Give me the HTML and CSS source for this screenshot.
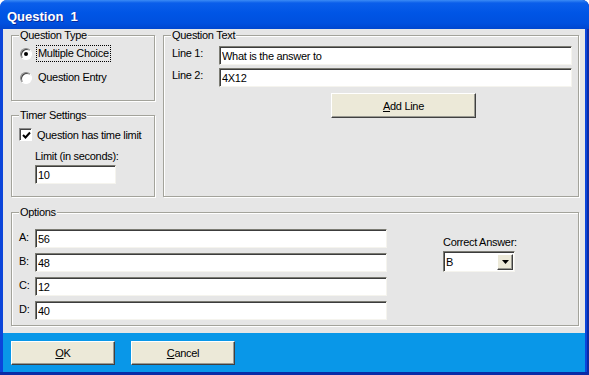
FILE: index.html
```html
<!DOCTYPE html>
<html lang="en">
<head>
  <meta charset="UTF-8" />
  <title>Question 1</title>
  <link rel="stylesheet" href="styles.css">
</head>
<body>

  <div class="window">
    <div class="titlebar">Question&nbsp; 1</div>

    <div class="client">
      <div class="top-row">
        <div class="left-col">
          <div class="group type-group">
            <div class="group-title">Question Type</div>
            <div class="radio-row">
              <span class="radio checked"></span>
              <span class="caption focus">Multiple Choice</span>
            </div>
            <div class="radio-row">
              <span class="radio"></span>
              <span class="caption">Question Entry</span>
            </div>
          </div>

          <div class="group timer-group">
            <div class="group-title">Timer Settings</div>
            <div class="check-row">
              <span class="checkbox">
                <svg width="9" height="9" viewBox="0 0 9 9">
                  <polyline points="1,4 3.5,6.5 8,1.5" fill="none" stroke="#000" stroke-width="2" />
                </svg>
              </span>
              Question has time limit
            </div>
            <div class="limit-label">Limit (in seconds):</div>
            <input class="textbox limit-box" type="text" value="10">
          </div>
        </div>

        <div class="group text-group">
          <div class="group-title">Question Text</div>
          <div class="line-row">
            <span class="line-label">Line 1:</span>
            <input class="textbox line-input" type="text" value="What is the answer to">
          </div>
          <div class="line-row">
            <span class="line-label">Line 2:</span>
            <input class="textbox line-input" type="text" value="4X12">
          </div>
          <button class="btn add-btn"><u>A</u>dd Line</button>
        </div>
      </div>

      <div class="group options-group">
        <div class="group-title">Options</div>
        <div class="options-body">
          <div class="option-list">
            <div class="option-row"><span class="option-label">A:</span><input class="textbox option-input" type="text" value="56"></div>
            <div class="option-row"><span class="option-label">B:</span><input class="textbox option-input" type="text" value="48"></div>
            <div class="option-row"><span class="option-label">C:</span><input class="textbox option-input" type="text" value="12"></div>
            <div class="option-row"><span class="option-label">D:</span><input class="textbox option-input" type="text" value="40"></div>
          </div>
          <div class="answer-col">
            <div class="answer-label">Correct Answer:</div>
            <div class="select">
              <span class="select-value">B</span>
              <span class="arrow">
                <svg width="7" height="4" viewBox="0 0 7 4"><polygon points="0,0 7,0 3.5,4" fill="#000" /></svg>
              </span>
            </div>
          </div>
        </div>
      </div>
    </div>

    <div class="footer">
      <button class="btn dlg-btn"><u>O</u>K</button>
      <button class="btn dlg-btn"><u>C</u>ancel</button>
    </div>
  </div>

</body>
</html>
```

FILE: styles.css
```css
* {
  box-sizing: border-box;
}

body {
  margin: 0;
  background: #fff;
  font-family: "Liberation Sans", Arial, sans-serif;
  font-size: 11px;
  letter-spacing: -0.3px;
  color: #000;
}

.window {
  width: 589px;
  height: 375px;
  padding: 0 4px 3px 3px;
  border-radius: 7px 7px 0 0;
  background: linear-gradient(to top, #0a2ba6 3px, #0b45da 3px);
  box-shadow: inset -2px 0 0 #0a2ba6;
  display: flex;
  flex-direction: column;
}

.titlebar {
  height: 29px;
  margin: 0 -4px 0 -3px;
  padding: 9px 0 0 7px;
  border-radius: 7px 7px 0 0;
  background: linear-gradient(#3b8bf5 0, #0a5eea 3px, #0055e5 45%, #0050df 80%, #0046cf 100%);
  color: #fff;
  font-weight: bold;
  font-size: 13px;
  line-height: 15px;
  letter-spacing: 0;
  text-shadow: 1px 1px 0 #0a2a9a;
}

.client {
  height: 304px;
  padding: 0 6px 0 8px;
  background: #e6e6e6;
}

.top-row {
  display: flex;
  gap: 8px;
  margin-top: 6px;
}

.left-col {
  width: 144px;
  display: flex;
  flex-direction: column;
}

/* etched group box */
.group {
  border: 1px solid #a3a39b;
  box-shadow: inset 1px 1px 0 #fff, 1px 1px 0 #fff;
}

.group-title {
  width: fit-content;
  margin: -7px 0 0 7px;
  padding: 0 1px;
  line-height: 13px;
  background: #e6e6e6;
}

.type-group {
  height: 66px;
}

.radio-row {
  display: flex;
  align-items: center;
  height: 17px;
  margin: 3px 0 0 8px;
}

.radio-row + .radio-row {
  margin-top: 7px;
}

.radio {
  width: 12px;
  height: 12px;
  margin-right: 4px;
  border: 1px solid;
  border-color: #8a8a8a #fff #fff #8a8a8a;
  border-radius: 50%;
  background: #fff;
  box-shadow: inset 1px 1px 0 #444;
  display: flex;
  align-items: center;
  justify-content: center;
}

.radio.checked::after {
  content: "";
  width: 4px;
  height: 4px;
  border-radius: 50%;
  background: #000;
}

.caption {
  padding: 1px;
  border: 1px dotted transparent;
  line-height: 13px;
}

.caption.focus {
  border-color: #000;
}

.timer-group {
  height: 82px;
  margin-top: 14px;
}

.check-row {
  display: flex;
  align-items: center;
  height: 15px;
  margin: 5px 0 0 7px;
}

.checkbox {
  width: 13px;
  height: 13px;
  margin-right: 5px;
  border: 1px solid;
  border-color: #8a8a8a #fff #fff #8a8a8a;
  box-shadow: inset 1px 1px 0 #444;
  background: #fff;
  display: flex;
  align-items: center;
  justify-content: center;
  padding: 1px 0 0 1px;
}

.limit-label {
  margin: 8px 0 0 23px;
  line-height: 13px;
}

.textbox {
  display: block;
  height: 19px;
  margin: 0;
  padding: 0 0 0 2px;
  border: 1px solid;
  border-color: #7b7b73 #f5f4ee #f5f4ee #7b7b73;
  box-shadow: inset 1px 1px 0 #3c3c3c;
  background: #fff;
  font: inherit;
  letter-spacing: inherit;
  color: #000;
  outline: none;
}

.limit-box {
  width: 81px;
  margin: 2px 0 0 23px;
}

.text-group {
  width: 416px;
  height: 162px;
}

.line-row {
  display: flex;
  margin: 4px 0 0 8px;
}

.line-row + .line-row {
  margin-top: 3px;
}

.line-label {
  width: 47px;
  padding-top: 1px;
  line-height: 13px;
}

.line-input {
  width: 353px;
}

.btn {
  padding: 0;
  border: 1px solid;
  border-color: #fff #404040 #404040 #fff;
  box-shadow: inset -1px -1px 0 #9a9a92;
  background: #ece9d8;
  font: inherit;
  letter-spacing: inherit;
  color: #000;
}

.add-btn {
  display: block;
  width: 145px;
  height: 25px;
  margin: 6px 0 0 167px;
}

.options-group {
  height: 114px;
  margin-top: 15px;
}

.options-body {
  display: flex;
}

.option-list {
  margin: 10px 0 0 7px;
  display: flex;
  flex-direction: column;
  gap: 5px;
}

.option-row {
  display: flex;
}

.option-label {
  width: 16px;
  padding-top: 2px;
  line-height: 13px;
}

.option-input {
  width: 352px;
}

.answer-col {
  margin-left: 56px;
  padding-top: 17px;
}

.answer-label {
  line-height: 13px;
}

.select {
  display: flex;
  align-items: center;
  width: 72px;
  height: 21px;
  margin-top: 2px;
  padding: 1px 1px 1px 2px;
  border: 1px solid;
  border-color: #7b7b73 #f5f4ee #f5f4ee #7b7b73;
  box-shadow: inset 1px 1px 0 #3c3c3c;
  background: #fff;
}

.select-value {
  flex: 1;
}

.arrow {
  width: 16px;
  height: 16px;
  border: 1px solid;
  border-color: #fff #404040 #404040 #fff;
  box-shadow: inset -1px -1px 0 #9a9a92;
  background: #ece9d8;
  display: flex;
  align-items: center;
  justify-content: center;
}

.footer {
  height: 39px;
  padding: 8px 0 0 8px;
  display: flex;
  align-items: flex-start;
  gap: 16px;
  background: #0997e8;
}

.dlg-btn {
  width: 104px;
  height: 24px;
}
```
